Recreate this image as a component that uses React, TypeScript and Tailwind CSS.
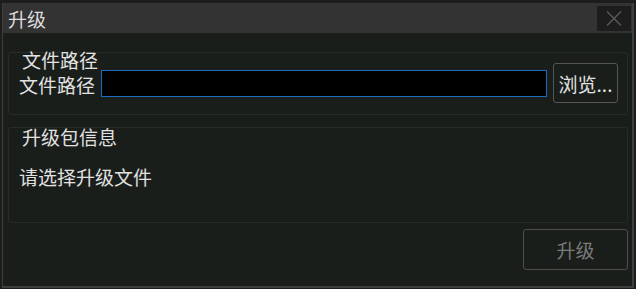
import React from "react";

const font = { fontFamily: '"Noto Sans CJK SC", "Noto Sans", sans-serif' };

export default function App() {
  return (
    <div className="w-[636px] h-[289px] bg-[#1c1e1c] pt-[3px] pl-[2px] overflow-hidden" style={font}>
      <div className="w-[632px] h-[285px] border-l border-r-2 border-b-2 border-[#3e3e3e] bg-[#1a1e1b] flex flex-col">
        {/* title bar */}
        <div className="h-[30px] bg-[#333333] flex items-center pl-[5px] pr-[1px]">
          <div className="text-[19px] leading-[19px] text-[#dcdcdc] flex-1">升级</div>
          <div className="w-[34px] h-[25px] bg-[#1d1d1d] flex items-center justify-center">
            <svg width="16" height="15" viewBox="0 0 16 15">
              <path d="M1 0.5 L15 14.5 M15 0.5 L1 14.5" stroke="#5c5c5c" strokeWidth="1.3" fill="none" />
            </svg>
          </div>
        </div>
        {/* body */}
        <div className="flex flex-col pl-[5px] pr-[4px] pt-[19px]">
          <div className="h-[63px] border border-[#272c28] rounded-[3px] flex flex-col">
            <div className="-mt-[3px] ml-[13px] text-[19px] leading-[19px] text-[#e2e2e2]">文件路径</div>
            <div className="flex items-center -mt-[6px] h-[40px] pl-[10px]">
              <div className="text-[19px] leading-[19px] text-[#e2e2e2] w-[82px] mt-[2px]">文件路径</div>
              <div className="w-[446px] h-[27px] bg-black border border-[#1e6bc4]" />
              <div className="ml-[6px] w-[65px] h-[40px] border border-[#555555] rounded-[3px] flex items-center justify-center text-[19px] leading-[19px] text-[#e2e2e2]">
                浏览...
              </div>
            </div>
          </div>
          <div className="mt-[12px] h-[96px] border border-[#272c28] rounded-[3px] flex flex-col">
            <div className="-mt-[1px] ml-[13px] text-[19px] leading-[19px] text-[#e2e2e2]">升级包信息</div>
            <div className="mt-[21px] ml-[10px] text-[19px] leading-[19px] text-[#e2e2e2]">请选择升级文件</div>
          </div>
          <div className="flex justify-end mt-[6px]">
            <div className="w-[105px] h-[41px] border border-[#4d4d4d] rounded-[3px] flex items-center justify-center text-[19px] leading-[19px] text-[#7a7a7a]">
              升级
            </div>
          </div>
        </div>
      </div>
    </div>
  );
}
